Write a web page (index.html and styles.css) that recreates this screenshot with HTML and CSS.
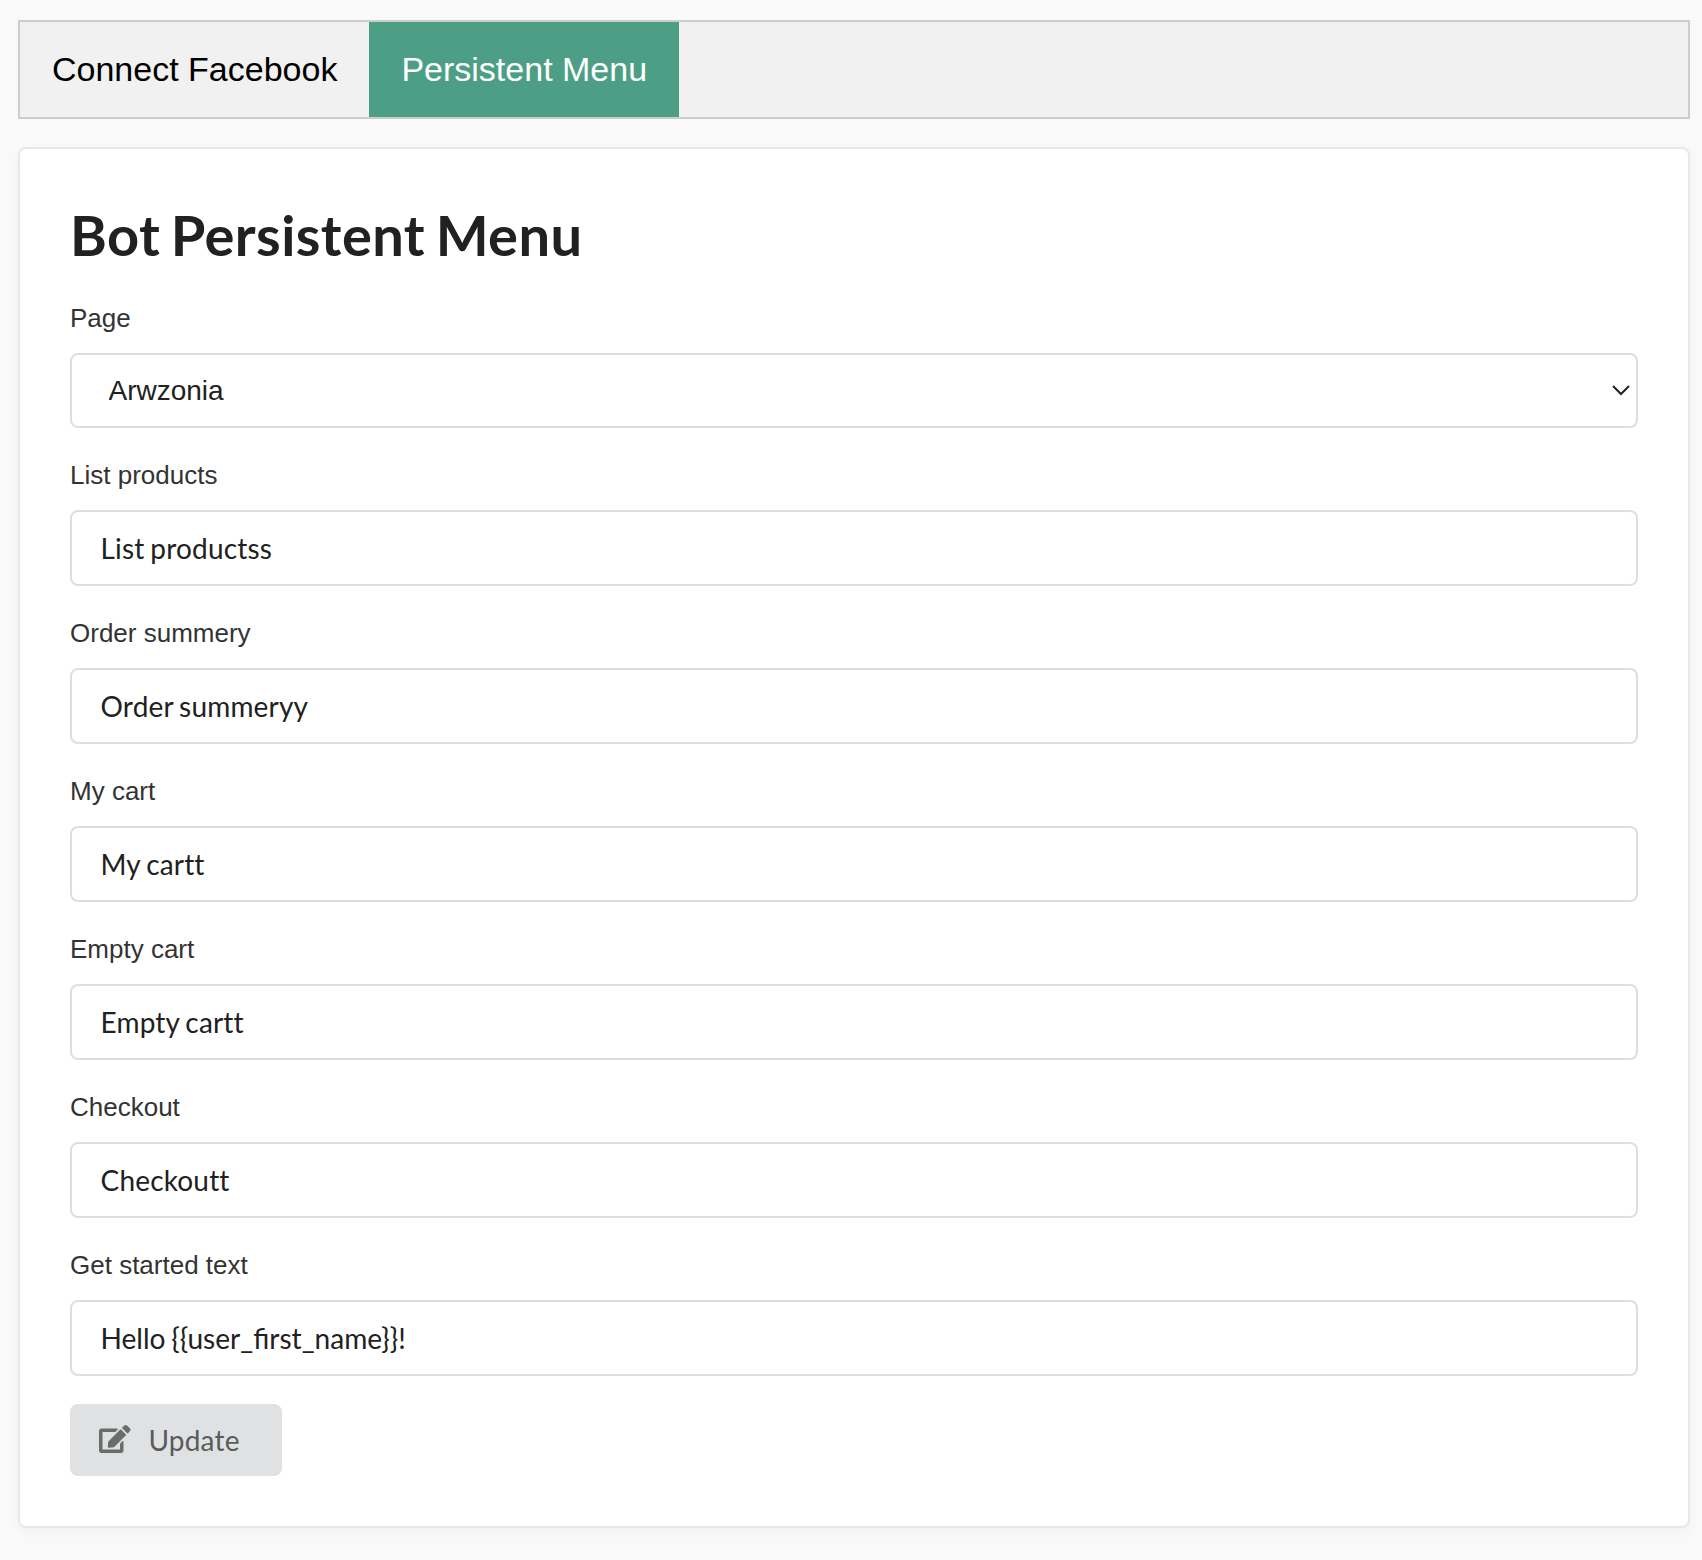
FILE: index.html
```html
<!DOCTYPE html>
<html lang="en">
<head>
<meta charset="utf-8">
<title>Bot Persistent Menu</title>
<link rel="stylesheet" href="styles.css">
</head>
<body>
<nav class="tabs">
  <button class="tab" type="button">Connect Facebook</button>
  <button class="tab tab-active" type="button">Persistent Menu</button>
</nav>
<main class="card">
  <h1 class="title">Bot Persistent Menu</h1>
  <form class="form">
    <div class="field">
      <label class="label" for="page">Page</label>
      <div class="select-wrap">
        <select class="control select" id="page"><option>Arwzonia</option></select>
        <svg class="chevron" width="20" height="12" viewBox="0 0 20 12"><path d="M2 2l8 8 8-8" fill="none" stroke="#222" stroke-width="2"/></svg>
      </div>
    </div>
    <div class="field">
      <label class="label" for="list">List products</label>
      <input class="control" id="list" type="text" value="List productss">
    </div>
    <div class="field">
      <label class="label" for="summary">Order summery</label>
      <input class="control" id="summary" type="text" value="Order summeryy">
    </div>
    <div class="field">
      <label class="label" for="cart">My cart</label>
      <input class="control" id="cart" type="text" value="My cartt">
    </div>
    <div class="field">
      <label class="label" for="empty">Empty cart</label>
      <input class="control" id="empty" type="text" value="Empty cartt">
    </div>
    <div class="field">
      <label class="label" for="checkout">Checkout</label>
      <input class="control" id="checkout" type="text" value="Checkoutt">
    </div>
    <div class="field">
      <label class="label" for="started">Get started text</label>
      <input class="control control-greeting" id="started" type="text" value="Hello {{user_first_name}}!">
    </div>
    <button class="update" type="button">
      <svg class="edit-icon" viewBox="0 0 576 512"><path fill="currentColor" d="M402.6 83.2l90.2 90.2c3.8 3.8 3.8 10 0 13.8L274.4 405.6l-92.8 10.3c-12.4 1.4-22.9-9.1-21.5-21.5l10.3-92.8L388.8 83.2c3.8-3.8 10-3.8 13.8 0zm162-22.9l-48.8-48.8c-15.2-15.2-39.9-15.2-55.2 0l-35.4 35.4c-3.8 3.8-3.8 10 0 13.8l90.2 90.2c3.8 3.8 10 3.8 13.8 0l35.4-35.4c15.2-15.3 15.2-40 0-55.2zM384 346.2V448H64V128h229.8c3.2 0 6.2-1.3 8.5-3.5l40-40c7.6-7.6 2.2-20.5-8.5-20.5H48C21.5 64 0 85.500 0 112v352c0 26.500 21.500 48 48 48h352c26.500 0 48-21.500 48-48V306.200c0-10.700-12.900-16-20.500-8.500l-40 40c-2.200 2.300-3.500 5.300-3.500 8.500z"/></svg>
      <span>Update</span>
    </button>
  </form>
</main>
</body>
</html>
```
FILE: styles.css
```css
* { box-sizing: border-box; }

body {
  margin: 0;
  padding: 20px 12px 32px 18px;
  background: #f9f9f9;
  font-family: Lato, sans-serif;
  font-size: 28px;
  color: #212121;
}

.tabs {
  display: flex;
  height: 99px;
  border: 2px solid #ccc;
  background: #f1f1f1;
}

.tab {
  padding: 0 32px 1px;
  border: 0;
  background: transparent;
  color: #000;
  font: 34px "Liberation Sans", Arial, sans-serif;
}

.tab-active {
  background: #4c9f84;
  color: #fff;
}

.card {
  margin-top: 28px;
  padding: 50px;
  border: 2px solid #e8e8e8;
  border-radius: 8px;
  background: #fff;
  box-shadow: 0 4px 12px rgba(0, 0, 0, 0.03);
}

.title {
  margin: 0 0 32px;
  font-size: 56px;
  line-height: 72px;
  font-weight: 700;
  letter-spacing: 0.43px;
  word-spacing: -3.5px;
}

.form {
  display: flex;
  flex-direction: column;
  align-items: stretch;
  gap: 32px;
}

.field {
  display: flex;
  flex-direction: column;
  gap: 20px;
}

.label {
  font: 26px/30px "Liberation Sans", Arial, sans-serif;
  color: #333;
}

.control {
  display: block;
  width: 100%;
  height: 76px;
  margin: 0;
  padding: 0 28.5px;
  border: 2px solid #dededf;
  border-radius: 8px;
  background: #fff;
  color: #212121;
  font: 28px Lato, sans-serif;
  font-variant-ligatures: none;
  letter-spacing: 0.18px;
  word-spacing: -1.5px;
}

.control-greeting {
  font-size: 28.1px;
  font-variant-ligatures: normal;
  letter-spacing: normal;
}

.select-wrap { position: relative; }

.select {
  height: 75px;
  padding: 0 36.5px;
  appearance: none;
  font-family: "Liberation Sans", Arial, sans-serif;
  letter-spacing: normal;
}

.chevron {
  position: absolute;
  right: 7px;
  top: 31px;
}

.update {
  display: flex;
  align-items: center;
  align-self: flex-start;
  width: 212px;
  height: 72px;
  margin-top: -4px;
  padding: 0 29px;
  gap: 18px;
  border: 0;
  border-radius: 8px;
  background: #e0e1e2;
  color: #5a5b5b;
  font: 28px Lato, sans-serif;
  letter-spacing: 0.18px;
}

.edit-icon {
  width: 31.5px;
  height: 28px;
  margin-bottom: 2px;
  color: #6b6c6c;
}
```
